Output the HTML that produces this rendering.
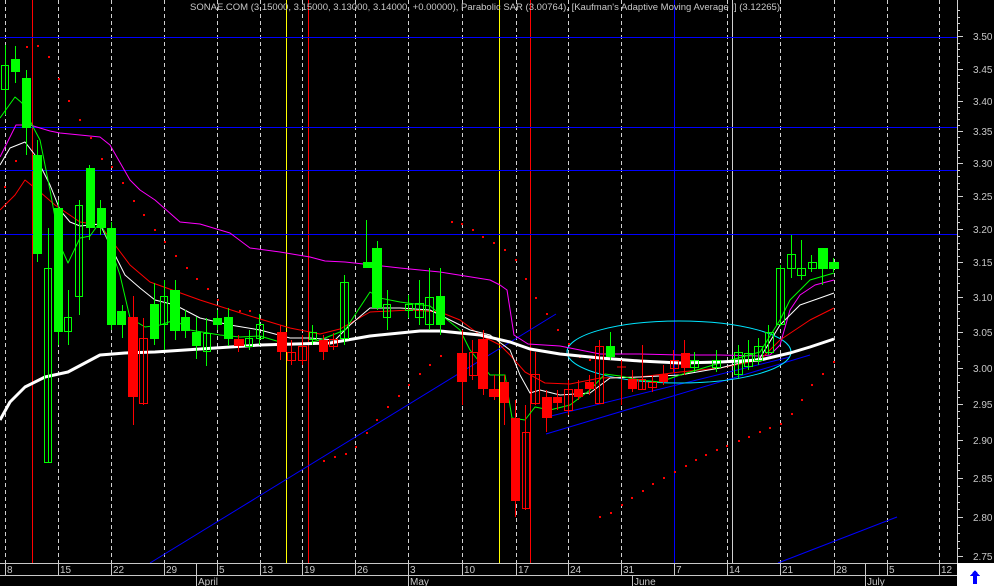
<!DOCTYPE html>
<html><head><meta charset="utf-8"><style>
html,body{margin:0;padding:0;background:#000;width:994px;height:586px;overflow:hidden}
svg{display:block}
text{font-family:"Liberation Sans",sans-serif;fill:#c8c8c8}
</style></head><body>
<svg width="994" height="586" viewBox="0 0 994 586" xmlns="http://www.w3.org/2000/svg" shape-rendering="crispEdges">
<rect width="994" height="586" fill="#000"/>
<!-- dashed verticals -->
<g stroke="#d0d0d0" stroke-width="1" stroke-dasharray="4,3">
<path d="M5.5 0V563M58.5 0V563M111.5 0V563M164.5 0V563M217.5 0V563M260.5 0V563M302.5 0V563M355.5 0V563M408.5 0V563M462.5 0V563M516.5 0V563M568.5 0V563M621.5 0V563M727.5 0V563M780.5 0V563M834.5 0V563M887.5 0V563M939.5 0V563"/>
</g>
<path d="M732.5 0V563" stroke="#d0d0d0"/>
<path d="M674.5 0V563" stroke="#0000ff"/>
<path d="M32.5 0V563M308.5 0V563M530.5 0V563" stroke="#ff0000"/>
<path d="M286.5 0V563M499.5 0V563" stroke="#ffff00"/>
<path d="M0 37.5H957M0 127.5H957M0 170.5H957M0 234.5H957" stroke="#0000ff"/>
<text x="190" y="10" font-size="9.5" textLength="590" lengthAdjust="spacing">SONAE.COM (3.15000, 3.15000, 3.13000, 3.14000, +0.00000), Parabolic SAR (3.00764), [Kaufman's Adaptive Moving Average I] (3.12265)</text>

<!-- trend lines -->
<g stroke="#0000ff" fill="none" shape-rendering="auto">
<path d="M150 563L556 314"/>
<path d="M546 434L810 355"/>
<path d="M547 417L790 357"/>
<path d="M778 563L897 517"/>
</g>
<ellipse cx="679" cy="352" rx="112" ry="31" stroke="#00e5ff" fill="none" shape-rendering="auto"/>

<!-- SAR dots -->
<g fill="#ff0000">
<rect x="26" y="46" width="2" height="2"/><rect x="37" y="45" width="2" height="2"/><rect x="48" y="56" width="2" height="2"/><rect x="58" y="78" width="2" height="2"/><rect x="68" y="100" width="2" height="2"/><rect x="79" y="119" width="2" height="2"/><rect x="90" y="137" width="2" height="2"/><rect x="101" y="158" width="2" height="2"/><rect x="111" y="166" width="2" height="2"/><rect x="122" y="182" width="2" height="2"/><rect x="4" y="186" width="2" height="2"/><rect x="15" y="160" width="2" height="2"/>
<rect x="133" y="200" width="2" height="2"/><rect x="143" y="214" width="2" height="2"/><rect x="154" y="229" width="2" height="2"/><rect x="164" y="241" width="2" height="2"/><rect x="175" y="255" width="2" height="2"/><rect x="186" y="267" width="2" height="2"/><rect x="196" y="278" width="2" height="2"/><rect x="207" y="288" width="2" height="2"/><rect x="217" y="299" width="2" height="2"/><rect x="239" y="310" width="2" height="2"/><rect x="249" y="310" width="2" height="2"/>
<rect x="323" y="460" width="2" height="2"/><rect x="334" y="456" width="2" height="2"/><rect x="345" y="453" width="2" height="2"/><rect x="355" y="446" width="2" height="2"/><rect x="366" y="432" width="2" height="2"/><rect x="376" y="419" width="2" height="2"/><rect x="387" y="406" width="2" height="2"/><rect x="398" y="395" width="2" height="2"/><rect x="408" y="384" width="2" height="2"/><rect x="419" y="373" width="2" height="2"/><rect x="429" y="364" width="2" height="2"/><rect x="440" y="355" width="2" height="2"/>
<rect x="451" y="221" width="2" height="2"/><rect x="461" y="223" width="2" height="2"/><rect x="472" y="229" width="2" height="2"/><rect x="482" y="236" width="2" height="2"/><rect x="493" y="242" width="2" height="2"/><rect x="504" y="249" width="2" height="2"/><rect x="515" y="259" width="2" height="2"/><rect x="525" y="278" width="2" height="2"/><rect x="535" y="297" width="2" height="2"/><rect x="546" y="313" width="2" height="2"/><rect x="557" y="329" width="2" height="2"/><rect x="568" y="343" width="2" height="2"/><rect x="579" y="356" width="2" height="2"/><rect x="589" y="359" width="2" height="2"/>
<rect x="599" y="516" width="2" height="2"/><rect x="610" y="512" width="2" height="2"/><rect x="621" y="504" width="2" height="2"/><rect x="631" y="497" width="2" height="2"/><rect x="642" y="490" width="2" height="2"/><rect x="652" y="483" width="2" height="2"/><rect x="663" y="477" width="2" height="2"/><rect x="674" y="471" width="2" height="2"/><rect x="685" y="465" width="2" height="2"/><rect x="695" y="459" width="2" height="2"/><rect x="705" y="454" width="2" height="2"/><rect x="716" y="449" width="2" height="2"/><rect x="726" y="445" width="2" height="2"/><rect x="738" y="440" width="2" height="2"/><rect x="748" y="436" width="2" height="2"/><rect x="759" y="431" width="2" height="2"/><rect x="769" y="427" width="2" height="2"/><rect x="780" y="423" width="2" height="2"/><rect x="791" y="413" width="2" height="2"/><rect x="801" y="399" width="2" height="2"/><rect x="811" y="384" width="2" height="2"/><rect x="822" y="373" width="2" height="2"/><rect x="833" y="361" width="2" height="2"/>
</g>

<!-- indicator lines -->
<g fill="none" shape-rendering="auto" stroke-linejoin="round">
<polyline stroke="#ff00ff" points="0,157 16,125 30,125 50,131 60,133 90,136 100,137 110,145 130,180 140,190 155,200 180,222 200,224 230,233 250,248 280,252 310,257 325,261 345,262 400,268 440,272 490,280 500,285 507,290 514,335 528,344 560,346 600,354 640,354 680,355 720,355 760,356 770,355 780,345 790,310 800,295 815,285 834,280"/>
<polyline stroke="#ff0000" points="0,210 15,195 25,180 40,192 55,205 80,222 100,225 115,245 130,265 150,282 200,300 250,316 290,328 320,334 340,329 370,312 410,310 440,312 460,320 480,335 500,345 510,355 525,372 545,383 570,384 600,378 640,377 680,372 720,368 760,360 780,340 810,320 834,308"/>
<polyline stroke="#ffffff" points="0,165 10,148 25,142 35,155 50,185 60,210 70,222 80,226 100,224 110,245 125,275 140,288 155,300 175,305 200,318 230,325 260,330 290,338 310,338 335,340 350,325 370,308 400,308 430,310 450,320 470,330 490,335 510,350 520,375 530,393 540,390 560,395 590,393 610,378 640,377 680,375 720,368 760,358 780,325 800,305 820,298 834,293"/>
<polyline stroke="#00ff00" points="0,118 15,97 22,103 32,125 40,140 50,190 60,245 68,263 80,238 90,236 100,222 108,240 120,275 130,318 145,327 160,325 175,320 190,330 220,335 240,337 260,336 280,342 300,345 320,340 345,330 370,292 380,298 400,302 430,306 445,318 460,330 470,350 490,375 505,375 512,418 525,420 535,407 550,410 570,405 590,390 605,374 620,376 640,380 660,382 680,375 720,363 760,352 780,320 790,300 810,280 834,273"/>
<polyline stroke="#ffffff" stroke-width="3" points="0,420 10,402 25,387 45,377 68,372 100,355 125,353 155,352 200,349 260,345 330,343 370,336 420,331 440,331 480,335 510,342 530,349 560,354 600,358 640,361 680,363 720,362 760,360 790,353 810,347 834,339"/>
</g>

<!-- candles -->
<g stroke-width="1">
<g stroke="#00ff00" fill="#00ff00">
<path d="M5.5 45V115M15.5 46V83M26.5 70V155M37.5 140V262M48.5 228V463M58.5 200V345M68.5 290V345M79.5 200V315M89.5 165V240M100.5 200V235M111.5 222V330M122.5 305V338M154.5 283V345M164.5 280V350M175.5 280V340M185.5 310V338M196.5 317V359M206.5 318V366M217.5 310V330M228.5 308V346M249.5 330V350M259.5 314V345M312.5 325V345M344.5 275V345M366.5 220V268M377.5 241V310M387.5 290V330M408.5 295V318M419.5 280V325M429.5 268V330M440.5 268V335M610.5 332V360M694.5 352V372M716.5 350V372M738.5 345V378M748.5 340V370M758.5 338V365M768.5 325V355M780.5 265V326M791.5 235V278M801.5 240V280M811.5 255V272M822.5 248V285M833.5 258V272"/>
<rect x="1.5" y="65.5" width="7" height="24" fill="none"/>
<rect x="11" y="59" width="9" height="13" stroke="none"/>
<rect x="22" y="78" width="9" height="50" stroke="none"/>
<rect x="33" y="155" width="9" height="99" stroke="none"/>
<rect x="44.5" y="268.5" width="7" height="194" fill="none"/>
<rect x="54" y="208" width="9" height="124" stroke="none"/>
<rect x="64.5" y="317.5" width="7" height="14" fill="none"/>
<rect x="75.5" y="205.5" width="7" height="91" fill="none"/>
<rect x="86" y="168" width="9" height="60" stroke="none"/>
<rect x="97" y="208" width="9" height="20" stroke="none"/>
<rect x="107" y="228" width="9" height="97" stroke="none"/>
<rect x="117" y="311" width="9" height="14" stroke="none"/>
<rect x="150" y="304" width="9" height="35" stroke="none"/>
<rect x="160.5" y="296.5" width="7" height="28" fill="none"/>
<rect x="170" y="290" width="10" height="41" stroke="none"/>
<rect x="181" y="317" width="9" height="14" stroke="none"/>
<rect x="192" y="332" width="9" height="14" stroke="none"/>
<rect x="203.5" y="333.5" width="7" height="18" fill="none"/>
<rect x="213" y="318" width="9" height="7" stroke="none"/>
<rect x="224" y="317" width="9" height="22" stroke="none"/>
<rect x="245.5" y="338.5" width="7" height="8" fill="none"/>
<rect x="256.5" y="324.5" width="7" height="14" fill="none"/>
<rect x="309.5" y="332.5" width="7" height="7" fill="none"/>
<rect x="340.5" y="282.5" width="8" height="56" fill="none"/>
<rect x="363" y="262" width="9" height="6" stroke="none"/>
<rect x="372" y="248" width="10" height="60" stroke="none"/>
<rect x="383.5" y="304.5" width="7" height="13" fill="none"/>
<rect x="405.5" y="304.5" width="7" height="6" fill="none"/>
<rect x="415.5" y="303.5" width="8" height="14" fill="none"/>
<rect x="425.5" y="297.5" width="8" height="27" fill="none"/>
<rect x="436" y="296" width="9" height="29" stroke="none"/>
<rect x="606" y="346" width="9" height="11" stroke="none"/>
<rect x="690.5" y="360.5" width="8" height="7" fill="none"/>
<rect x="712.5" y="360.5" width="8" height="7" fill="none"/>
<rect x="734.5" y="352.5" width="8" height="22" fill="none"/>
<rect x="744.5" y="353.5" width="8" height="13" fill="none"/>
<rect x="754.5" y="346.5" width="8" height="14" fill="none"/>
<rect x="765.5" y="332.5" width="8" height="20" fill="none"/>
<rect x="776.5" y="268.5" width="8" height="56" fill="none"/>
<rect x="787.5" y="254.5" width="8" height="14" fill="none"/>
<rect x="797.5" y="268.5" width="8" height="7" fill="none"/>
<rect x="808.5" y="262.5" width="8" height="6" fill="none"/>
<rect x="818" y="248" width="10" height="21" stroke="none"/>
<rect x="829" y="262" width="10" height="7" stroke="none"/>
</g>
<g stroke="#ff0000" fill="#ff0000">
<path d="M133.5 296V425M143.5 318V405M238.5 335V352M280.5 325V360M291.5 340V365M302.5 335V365M323.5 335V360M333.5 333V350M462.5 330V405M472.5 340V380M483.5 330V395M494.5 375V400M504.5 375V425M515.5 400V517M525.5 405V510M535.5 352V405M546.5 390V432M557.5 390V410M568.5 380V415M578.5 380V400M589.5 375V395M599.5 340V404M621.5 360V405M632.5 370V392M642.5 345V390M652.5 375V392M663.5 365V385M673.5 350V372M684.5 340V375"/>
<rect x="128" y="317" width="10" height="80" stroke="none"/>
<rect x="139.5" y="338.5" width="8" height="65" fill="none"/>
<rect x="234" y="339" width="10" height="7" stroke="none"/>
<rect x="277" y="332" width="10" height="20" stroke="none"/>
<rect x="287.5" y="352.5" width="8" height="8" fill="none"/>
<rect x="298.5" y="346.5" width="8" height="14" fill="none"/>
<rect x="319" y="340" width="9" height="12" stroke="none"/>
<rect x="329.5" y="339.5" width="8" height="7" fill="none"/>
<rect x="457" y="353" width="10" height="29" stroke="none"/>
<rect x="469.5" y="352.5" width="8" height="23" fill="none"/>
<rect x="478" y="339" width="10" height="50" stroke="none"/>
<rect x="489" y="389" width="10" height="8" stroke="none"/>
<rect x="500" y="382" width="9" height="21" stroke="none"/>
<rect x="511" y="418" width="9" height="83" stroke="none"/>
<rect x="522.5" y="432.5" width="7" height="76" fill="none"/>
<rect x="531.5" y="374.5" width="8" height="29" fill="none"/>
<rect x="542" y="397" width="10" height="21" stroke="none"/>
<rect x="553" y="397" width="9" height="6" stroke="none"/>
<rect x="564.5" y="389.5" width="8" height="21" fill="none"/>
<rect x="574" y="389" width="9" height="8" stroke="none"/>
<rect x="585" y="382" width="9" height="7" stroke="none"/>
<rect x="595.5" y="346.5" width="8" height="57" fill="none"/>
<path d="M617 367H626"/>
<rect x="628" y="379" width="9" height="10" stroke="none"/>
<rect x="638.5" y="379.5" width="7" height="10" fill="none"/>
<rect x="648.5" y="382.5" width="8" height="5" fill="none"/>
<rect x="659" y="374" width="9" height="8" stroke="none"/>
<rect x="670.5" y="360.5" width="8" height="8" fill="none"/>
<rect x="681" y="353" width="9" height="15" stroke="none"/>
</g>
</g>

<!-- right price axis -->
<rect x="958" y="0" width="36" height="563" fill="#000"/>
<path d="M957.5 0V563" stroke="#d0d0d0"/>
<g stroke="#d0d0d0">
<path d="M957 36.5H963M957 69.5H963M957 101.5H963M957 131.5H963M957 163.5H963M957 196.5H963M957 229.5H963M957 262.5H963M957 297.5H963M957 332.5H963M957 368.5H963M957 404.5H963M957 440.5H963M957 478.5H963M957 517.5H963M957 556.5H963"/>
<path d="M957 10.5H960M957 17.5H960M957 23.5H960M957 30.5H960M957 43.5H960M957 49.5H960M957 56.5H960M957 62.5H960M957 75.5H960M957 82.5H960M957 88.5H960M957 95.5H960M957 107.5H960M957 113.5H960M957 119.5H960M957 125.5H960M957 137.5H960M957 144.5H960M957 150.5H960M957 157.5H960M957 170.5H960M957 176.5H960M957 183.5H960M957 189.5H960M957 203.5H960M957 209.5H960M957 216.5H960M957 222.5H960M957 236.5H960M957 243.5H960M957 249.5H960M957 256.5H960M957 269.5H960M957 276.5H960M957 283.5H960M957 290.5H960M957 304.5H960M957 311.5H960M957 318.5H960M957 325.5H960M957 339.5H960M957 346.5H960M957 354.5H960M957 361.5H960M957 375.5H960M957 382.5H960M957 390.5H960M957 397.5H960M957 411.5H960M957 418.5H960M957 426.5H960M957 433.5H960M957 448.5H960M957 455.5H960M957 463.5H960M957 470.5H960M957 486.5H960M957 494.5H960M957 502.5H960M957 509.5H960M957 525.5H960M957 533.5H960M957 541.5H960M957 548.5H960"/>
</g>
<g font-size="10">
<text x="973" y="40">3.50</text><text x="973" y="73">3.45</text><text x="973" y="105">3.40</text><text x="973" y="135">3.35</text><text x="973" y="167">3.30</text><text x="973" y="200">3.25</text><text x="973" y="233">3.20</text><text x="973" y="266">3.15</text><text x="973" y="301">3.10</text><text x="973" y="336">3.05</text><text x="973" y="372">3.00</text><text x="973" y="408">2.95</text><text x="973" y="444">2.90</text><text x="973" y="482">2.85</text><text x="973" y="521">2.80</text><text x="973" y="560">2.75</text>
</g>

<!-- bottom axis -->
<rect x="0" y="563" width="957" height="23" fill="#000"/>
<path d="M0 563.5H957M0 575.5H957" stroke="#c8c8c8"/>
<g stroke="#c8c8c8">
<path d="M5.5 563V575M58.5 563V575M111.5 563V575M164.5 563V575M196.5 563V575M217.5 563V575M260.5 563V575M302.5 563V575M355.5 563V575M408.5 563V575M462.5 563V575M516.5 563V575M568.5 563V575M621.5 563V575M674.5 563V575M727.5 563V575M780.5 563V575M834.5 563V575M865.5 563V575M887.5 563V575M939.5 563V575"/>
<path d="M196.5 575V586M408.5 575V586M632.5 575V586M865.5 575V586"/>
</g>
<g font-size="10">
<text x="7" y="573">8</text><text x="60" y="573">15</text><text x="113" y="573">22</text><text x="166" y="573">29</text><text x="219" y="573">5</text><text x="262" y="573">13</text><text x="304" y="573">19</text><text x="357" y="573">26</text><text x="410" y="573">3</text><text x="464" y="573">10</text><text x="518" y="573">17</text><text x="570" y="573">24</text><text x="623" y="573">31</text><text x="676" y="573">7</text><text x="729" y="573">14</text><text x="782" y="573">21</text><text x="836" y="573">28</text><text x="889" y="573">5</text><text x="941" y="573">12</text>
<text x="198" y="585">April</text><text x="410" y="585">May</text><text x="634" y="585">June</text><text x="867" y="585">July</text>
</g>
<rect x="957" y="563" width="37" height="23" fill="#fff"/>
<path d="M975 570L980 576H977V584H973V576H970Z" fill="#0000ff"/>
</svg>
</body></html>
